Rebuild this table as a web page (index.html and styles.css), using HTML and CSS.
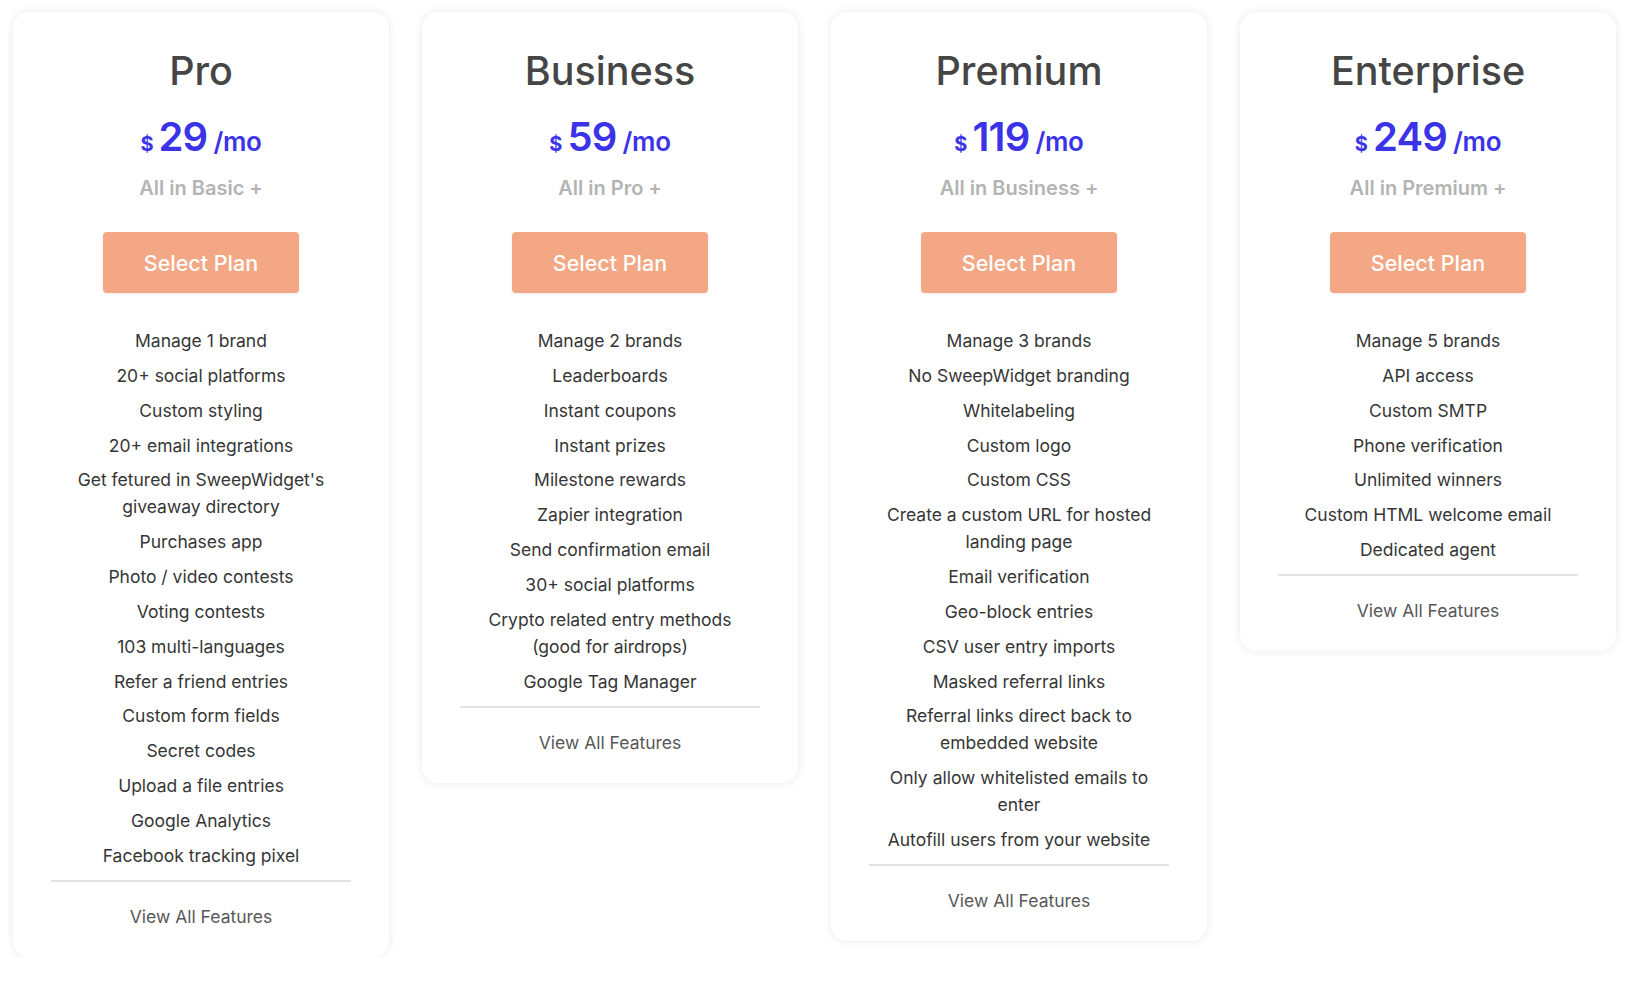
FILE: index.html
```html
<!DOCTYPE html>
<html lang="en">
<head>
<meta charset="utf-8">
<title>Pricing</title>
<link rel="stylesheet" href="styles.css">
</head>
<body>
<div class="plans">
  <div class="card">
    <h2 class="name">Pro</h2>
    <div class="price"><span class="cur">$</span><span class="amt">29</span><span class="per">/mo</span></div>
    <div class="base">All in Basic +</div>
    <button class="select">Select Plan</button>
    <ul class="features">
      <li>Manage 1 brand</li>
      <li>20+ social platforms</li>
      <li>Custom styling</li>
      <li>20+ email integrations</li>
      <li>Get fetured in SweepWidget's giveaway directory</li>
      <li>Purchases app</li>
      <li>Photo / video contests</li>
      <li>Voting contests</li>
      <li>103 multi-languages</li>
      <li>Refer a friend entries</li>
      <li>Custom form fields</li>
      <li>Secret codes</li>
      <li>Upload a file entries</li>
      <li>Google Analytics</li>
      <li>Facebook tracking pixel</li>
    </ul>
    <div class="sep"></div>
    <a class="all">View All Features</a>
  </div>
  <div class="card">
    <h2 class="name">Business</h2>
    <div class="price"><span class="cur">$</span><span class="amt">59</span><span class="per">/mo</span></div>
    <div class="base">All in Pro +</div>
    <button class="select">Select Plan</button>
    <ul class="features">
      <li>Manage 2 brands</li>
      <li>Leaderboards</li>
      <li>Instant coupons</li>
      <li>Instant prizes</li>
      <li>Milestone rewards</li>
      <li>Zapier integration</li>
      <li>Send confirmation email</li>
      <li>30+ social platforms</li>
      <li>Crypto related entry methods (good for airdrops)</li>
      <li>Google Tag Manager</li>
    </ul>
    <div class="sep"></div>
    <a class="all">View All Features</a>
  </div>
  <div class="card">
    <h2 class="name">Premium</h2>
    <div class="price"><span class="cur">$</span><span class="amt">119</span><span class="per">/mo</span></div>
    <div class="base">All in Business +</div>
    <button class="select">Select Plan</button>
    <ul class="features">
      <li>Manage 3 brands</li>
      <li>No SweepWidget branding</li>
      <li>Whitelabeling</li>
      <li>Custom logo</li>
      <li>Custom CSS</li>
      <li>Create a custom URL for hosted landing page</li>
      <li>Email verification</li>
      <li>Geo-block entries</li>
      <li>CSV user entry imports</li>
      <li>Masked referral links</li>
      <li>Referral links direct back to embedded website</li>
      <li>Only allow whitelisted emails to enter</li>
      <li>Autofill users from your website</li>
    </ul>
    <div class="sep"></div>
    <a class="all">View All Features</a>
  </div>
  <div class="card">
    <h2 class="name">Enterprise</h2>
    <div class="price"><span class="cur">$</span><span class="amt">249</span><span class="per">/mo</span></div>
    <div class="base">All in Premium +</div>
    <button class="select">Select Plan</button>
    <ul class="features">
      <li>Manage 5 brands</li>
      <li>API access</li>
      <li>Custom SMTP</li>
      <li>Phone verification</li>
      <li>Unlimited winners</li>
      <li>Custom HTML welcome email</li>
      <li>Dedicated agent</li>
    </ul>
    <div class="sep"></div>
    <a class="all">View All Features</a>
  </div>
</div>
</body>
</html>
```

FILE: styles.css
```css
* { box-sizing: border-box; }
html, body { margin: 0; padding: 0; background: #ffffff; }
body {
  font-family: Inter, "Open Sans", "Liberation Sans", sans-serif;
  color: #333;
}
.plans {
  display: flex;
  align-items: flex-start;
  gap: 33px;
  padding: 12px 15px 0 13px;
}
.card {
  width: 376px;
  flex: none;
  background: #fff;
  border-radius: 16px;
  box-shadow: 0 0 10px rgba(0, 0, 0, 0.09);
  padding: 35px 38px 27px;
  display: flex;
  flex-direction: column;
  align-items: center;
  text-align: center;
}
.name {
  margin: 0;
  font-size: 39.5px;
  line-height: 48px;
  font-weight: 500;
  color: #454545;
}
.price {
  margin-top: 16px;
  height: 52px;
  display: flex;
  align-items: baseline;
  justify-content: center;
  color: #3b33e8;
  line-height: 52px;
}
.cur { font-size: 20px; font-weight: 700; margin-right: 5px; }
.amt { font-size: 40px; font-weight: 600; letter-spacing: -0.8px; margin-right: 6px; }
.per { font-size: 26px; font-weight: 600; letter-spacing: -0.3px; }
.base {
  margin-top: 11px;
  font-size: 20px;
  line-height: 28px;
  font-weight: 600;
  color: #b4b4b4;
}
.select {
  margin-top: 30px;
  width: 196px;
  height: 61px;
  border: 0;
  border-radius: 4px;
  background: #f3a784;
  color: #fff;
  font-family: inherit;
  font-size: 21.5px;
  font-weight: 500;
  box-shadow: 0 1px 3px rgba(0,0,0,0.08);
}
.features {
  list-style: none;
  margin: 34px 0 0;
  padding: 0;
  width: 100%;
  display: flex;
  flex-direction: column;
  gap: 7.85px;
  font-size: 17.5px;
  line-height: 27px;
  color: #363636;
}
.features li { padding: 0 12px; }
.sep {
  margin-top: 11px;
  width: 100%;
  height: 2px;
  background: #e2e2e2;
}
.all {
  margin-top: 21px;
  font-size: 17.5px;
  line-height: 27px;
  color: #585858;
}
```
